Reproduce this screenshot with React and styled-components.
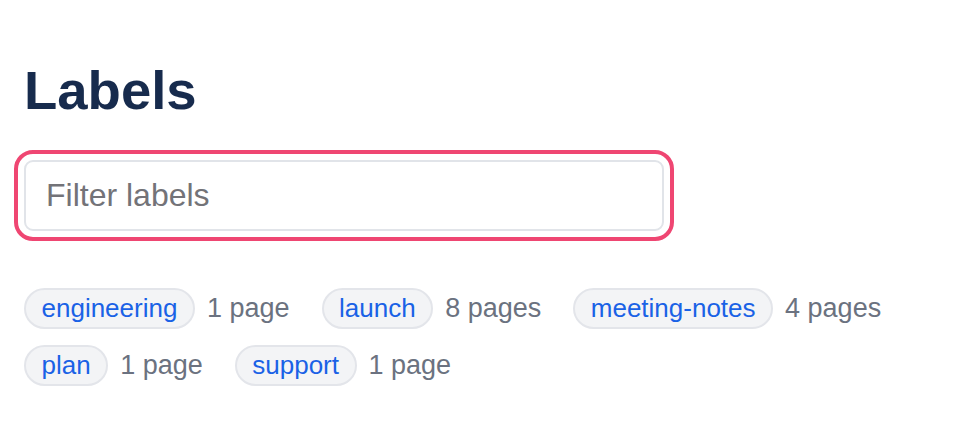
import React from "react";
import styled, { createGlobalStyle } from "styled-components";

const GlobalStyle = createGlobalStyle`
  html, body { margin: 0; padding: 0; background: #ffffff; }
  body { font-family: "Liberation Sans", Arial, sans-serif; }
  * { box-sizing: border-box; }
`;

const Page = styled.main`
  padding: 61px 24px 24px 24px;
  display: flex;
  flex-direction: column;
`;

const Title = styled.h1`
  margin: 0;
  font-size: 54.5px;
  font-weight: 700;
  line-height: 60px;
  color: #172b4d;
`;

const FilterInput = styled.input`
  margin-top: 39px;
  width: 640px;
  height: 71px;
  padding: 0 20px;
  border: 2px solid #e1e4e9;
  border-radius: 9px;
  font-family: "Liberation Sans", Arial, sans-serif;
  font-size: 32px;
  color: #172b4d;
  background: #ffffff;
  outline: 4px solid #ef4672;
  outline-offset: 6px;
  &::placeholder { color: #737378; }
`;

const LabelList = styled.ul`
  list-style: none;
  margin: 57px 0 0 0;
  padding: 0;
  display: flex;
  flex-wrap: wrap;
  column-gap: 32px;
  row-gap: 16px;
  max-width: 900px;
`;

const LabelItem = styled.li`
  display: flex;
  align-items: center;
  gap: 12px;
`;

const Chip = styled.a`
  display: inline-flex;
  align-items: center;
  height: 41px;
  padding: 0 15.5px;
  border: 2px solid #e3e5ea;
  border-radius: 21px;
  background: #f3f4f6;
  color: #1a62e6;
  font-size: 26px;
  text-decoration: none;
`;

const Count = styled.span`
  font-size: 27px;
  color: #6b7280;
`;

const labels = [
  { name: "engineering", count: 1 },
  { name: "launch", count: 8 },
  { name: "meeting-notes", count: 4 },
  { name: "plan", count: 1 },
  { name: "support", count: 1 },
];

export default function App() {
  return (
    <>
      <GlobalStyle />
      <Page>
        <Title>Labels</Title>
        <FilterInput placeholder="Filter labels" />
        <LabelList>
          {labels.map((l) => (
            <LabelItem key={l.name}>
              <Chip href="#">{l.name}</Chip>
              <Count>
                {l.count} {l.count === 1 ? "page" : "pages"}
              </Count>
            </LabelItem>
          ))}
        </LabelList>
      </Page>
    </>
  );
}
